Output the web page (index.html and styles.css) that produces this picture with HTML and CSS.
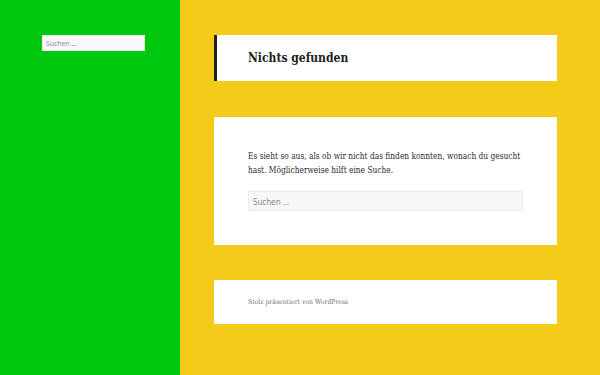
FILE: index.html
```html
<!DOCTYPE html>
<html lang="de">
<head>
<meta charset="utf-8">
<title>Nichts gefunden</title>
<link rel="stylesheet" href="styles.css">
</head>
<body>
<div class="site">
  <aside class="sidebar">
    <form class="side-search">
      <input class="side-field" type="search" placeholder="Suchen …">
    </form>
  </aside>
  <main class="content">
    <header class="page-header box">
      <h1 class="page-title">Nichts gefunden</h1>
    </header>
    <section class="box notfound">
      <p class="msg">Es sieht so aus, als ob wir nicht das finden konnten, wonach du gesucht hast. Möglicherweise hilft eine Suche.</p>
      <form class="main-search">
        <input class="main-field" type="search" placeholder="Suchen …">
      </form>
    </section>
    <footer class="box footer">
      <a class="credit" href="#">Stolz präsentiert von WordPress</a>
    </footer>
  </main>
</div>
</body>
</html>
```
FILE: styles.css
```css
html, body {
  margin: 0;
  padding: 0;
  height: 100%;
}
body {
  background: #f4cb18;
  font-family: "DejaVu Serif Condensed", "DejaVu Serif", serif;
  font-stretch: condensed;
  color: #333;
}
.site {
  display: flex;
  min-height: 375px;
}
.sidebar {
  width: 180px;
  flex: none;
  background: #00c80e;
  padding: 35px 0 0 42px;
  box-sizing: border-box;
}
.side-search {
  margin: 0;
}
.side-field {
  display: block;
  width: 103px;
  height: 16px;
  box-sizing: border-box;
  margin: 0;
  padding: 0 3px;
  border: 1px solid #e8e8e8;
  background: #f9f9f9;
  font-family: "Noto Sans", sans-serif;
  font-size: 6.8px;
  color: #333;
  outline: none;
}
.side-field::placeholder { color: #8a8a8a; }
.content {
  flex: none;
  width: 343px;
  margin-left: 34px;
  padding-top: 35px;
  display: flex;
  flex-direction: column;
  gap: 36px;
}
.box {
  background: #fff;
  box-sizing: border-box;
}
.page-header {
  height: 46px;
  border-left: 3px solid #222;
  padding: 0 31px;
  display: flex;
  align-items: center;
}
.page-title {
  margin: 0;
  font-size: 12px;
  font-weight: bold;
  color: #222;
}
.notfound {
  height: 128px;
  padding: 33px 34px 0;
}
.msg {
  margin: 0 0 14px;
  font-size: 8.3px;
  line-height: 13.5px;
  color: #2a2a2a;
}
.main-search { margin: 0; }
.main-field {
  display: block;
  width: 100%;
  height: 20px;
  box-sizing: border-box;
  margin: 0;
  padding: 0 4px;
  border: 1px solid #ebebeb;
  background: #f7f7f7;
  font-family: "Noto Sans", sans-serif;
  font-size: 8px;
  outline: none;
}
.main-field::placeholder { color: #888; }
.footer {
  height: 44px;
  margin-top: -1px;
  padding: 0 34px;
  display: flex;
  align-items: center;
}
.credit {
  font-size: 6.8px;
  color: #707070;
  text-decoration: none;
}
```
